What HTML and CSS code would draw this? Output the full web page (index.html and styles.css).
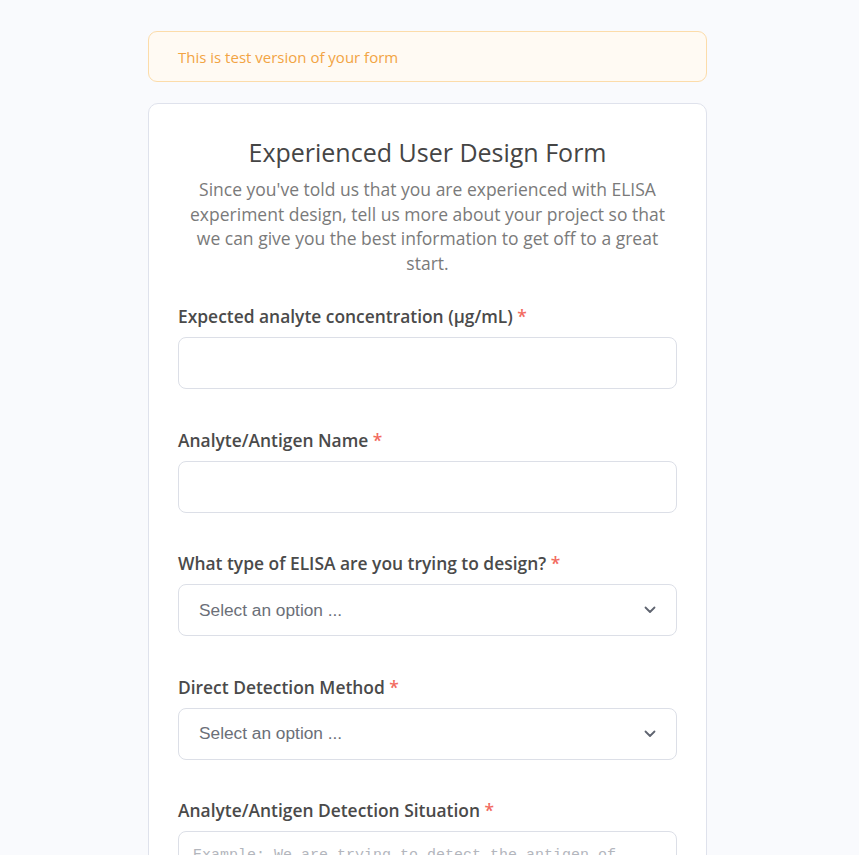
FILE: index.html
```html
<!DOCTYPE html>
<html>
<head>
<meta charset="utf-8">
<link rel="stylesheet" href="styles.css">
</head>
<body>
<div class="wrap">
  <div class="banner">This is test version of your form</div>
  <div class="card">
    <h1 class="title">Experienced User Design Form</h1>
    <p class="subtitle">Since you've told us that you are experienced with ELISA experiment design, tell us more about your project so that we can give you the best information to get off to a great start.</p>

    <div class="field">
      <label class="label">Expected analyte concentration (µg/mL) <span class="req">*</span></label>
      <input class="input" type="text">
    </div>
    <div class="field">
      <label class="label">Analyte/Antigen Name <span class="req">*</span></label>
      <input class="input" type="text">
    </div>
    <div class="field">
      <label class="label">What type of ELISA are you trying to design? <span class="req">*</span></label>
      <div class="select">
        <span>Select an option ...</span>
        <svg class="chev" width="12" height="8" viewBox="0 0 12 8"><path d="M1.5 1.5 L6 6 L10.5 1.5" fill="none" stroke="#5f6470" stroke-width="1.8" stroke-linecap="round" stroke-linejoin="round"/></svg>
      </div>
    </div>
    <div class="field">
      <label class="label">Direct Detection Method <span class="req">*</span></label>
      <div class="select">
        <span>Select an option ...</span>
        <svg class="chev" width="12" height="8" viewBox="0 0 12 8"><path d="M1.5 1.5 L6 6 L10.5 1.5" fill="none" stroke="#5f6470" stroke-width="1.8" stroke-linecap="round" stroke-linejoin="round"/></svg>
      </div>
    </div>
    <div class="field">
      <label class="label">Analyte/Antigen Detection Situation <span class="req">*</span></label>
      <textarea class="textarea" placeholder="Example: We are trying to detect the antigen of interest in human serum samples."></textarea>
    </div>
  </div>
</div>
</body>
</html>
```
FILE: styles.css
```css
html, body {
  margin: 0;
  padding: 0;
  background: #f9fafd;
  font-family: "Open Sans", "Noto Sans", sans-serif;
}
.wrap {
  width: 559px;
  margin-left: calc(50% - 281.5px);
  padding-top: 31px;
}
.banner {
  height: 51px;
  box-sizing: border-box;
  border: 1px solid #fcdcaa;
  background: #fffaf3;
  border-radius: 9px;
  padding: 0 29px;
  display: flex;
  align-items: center;
  font-size: 15px;
  color: #f2a443;
}
.card {
  margin-top: 21px;
  background: #fff;
  border: 1px solid #dfe2ec;
  border-radius: 10px;
  padding: 29px 29px 40px;
}
.title {
  margin: 0;
  text-align: center;
  font-weight: 400;
  font-size: 25px;
  line-height: 38px;
  color: #454545;
}
.subtitle {
  margin: 6px 0 0;
  text-align: center;
  font-size: 17.5px;
  line-height: 24.5px;
  color: #7a7a7a;
  padding: 0 6px;
}
.field {
  margin-top: 30px;
}
.field + .field {
  margin-top: 39.5px;
}
.label {
  display: block;
  font-size: 17.4px;
  font-weight: 600;
  color: #4a4a4a;
  line-height: 22px;
  margin-bottom: 10px;
}
.req {
  color: #f26b5f;
}
.input, .select, .textarea {
  display: block;
  width: 100%;
  box-sizing: border-box;
  height: 52px;
  border: 1px solid #dcdfe7;
  border-radius: 8px;
  background: #fff;
  margin: 0;
}
.select {
  display: flex;
  align-items: center;
  justify-content: space-between;
  padding: 0 20px 0 20px;
  font-family: "Liberation Sans", Arial, sans-serif;
  font-size: 17.3px;
  color: #6b6f78;
}
.chev {
  display: block;
}
.textarea {
  height: 100px;
  padding: 15px 14px;
  font-family: "Liberation Mono", monospace;
  font-size: 15px;
  resize: none;
}
.textarea::placeholder {
  color: #b3b6bd;
}
```
